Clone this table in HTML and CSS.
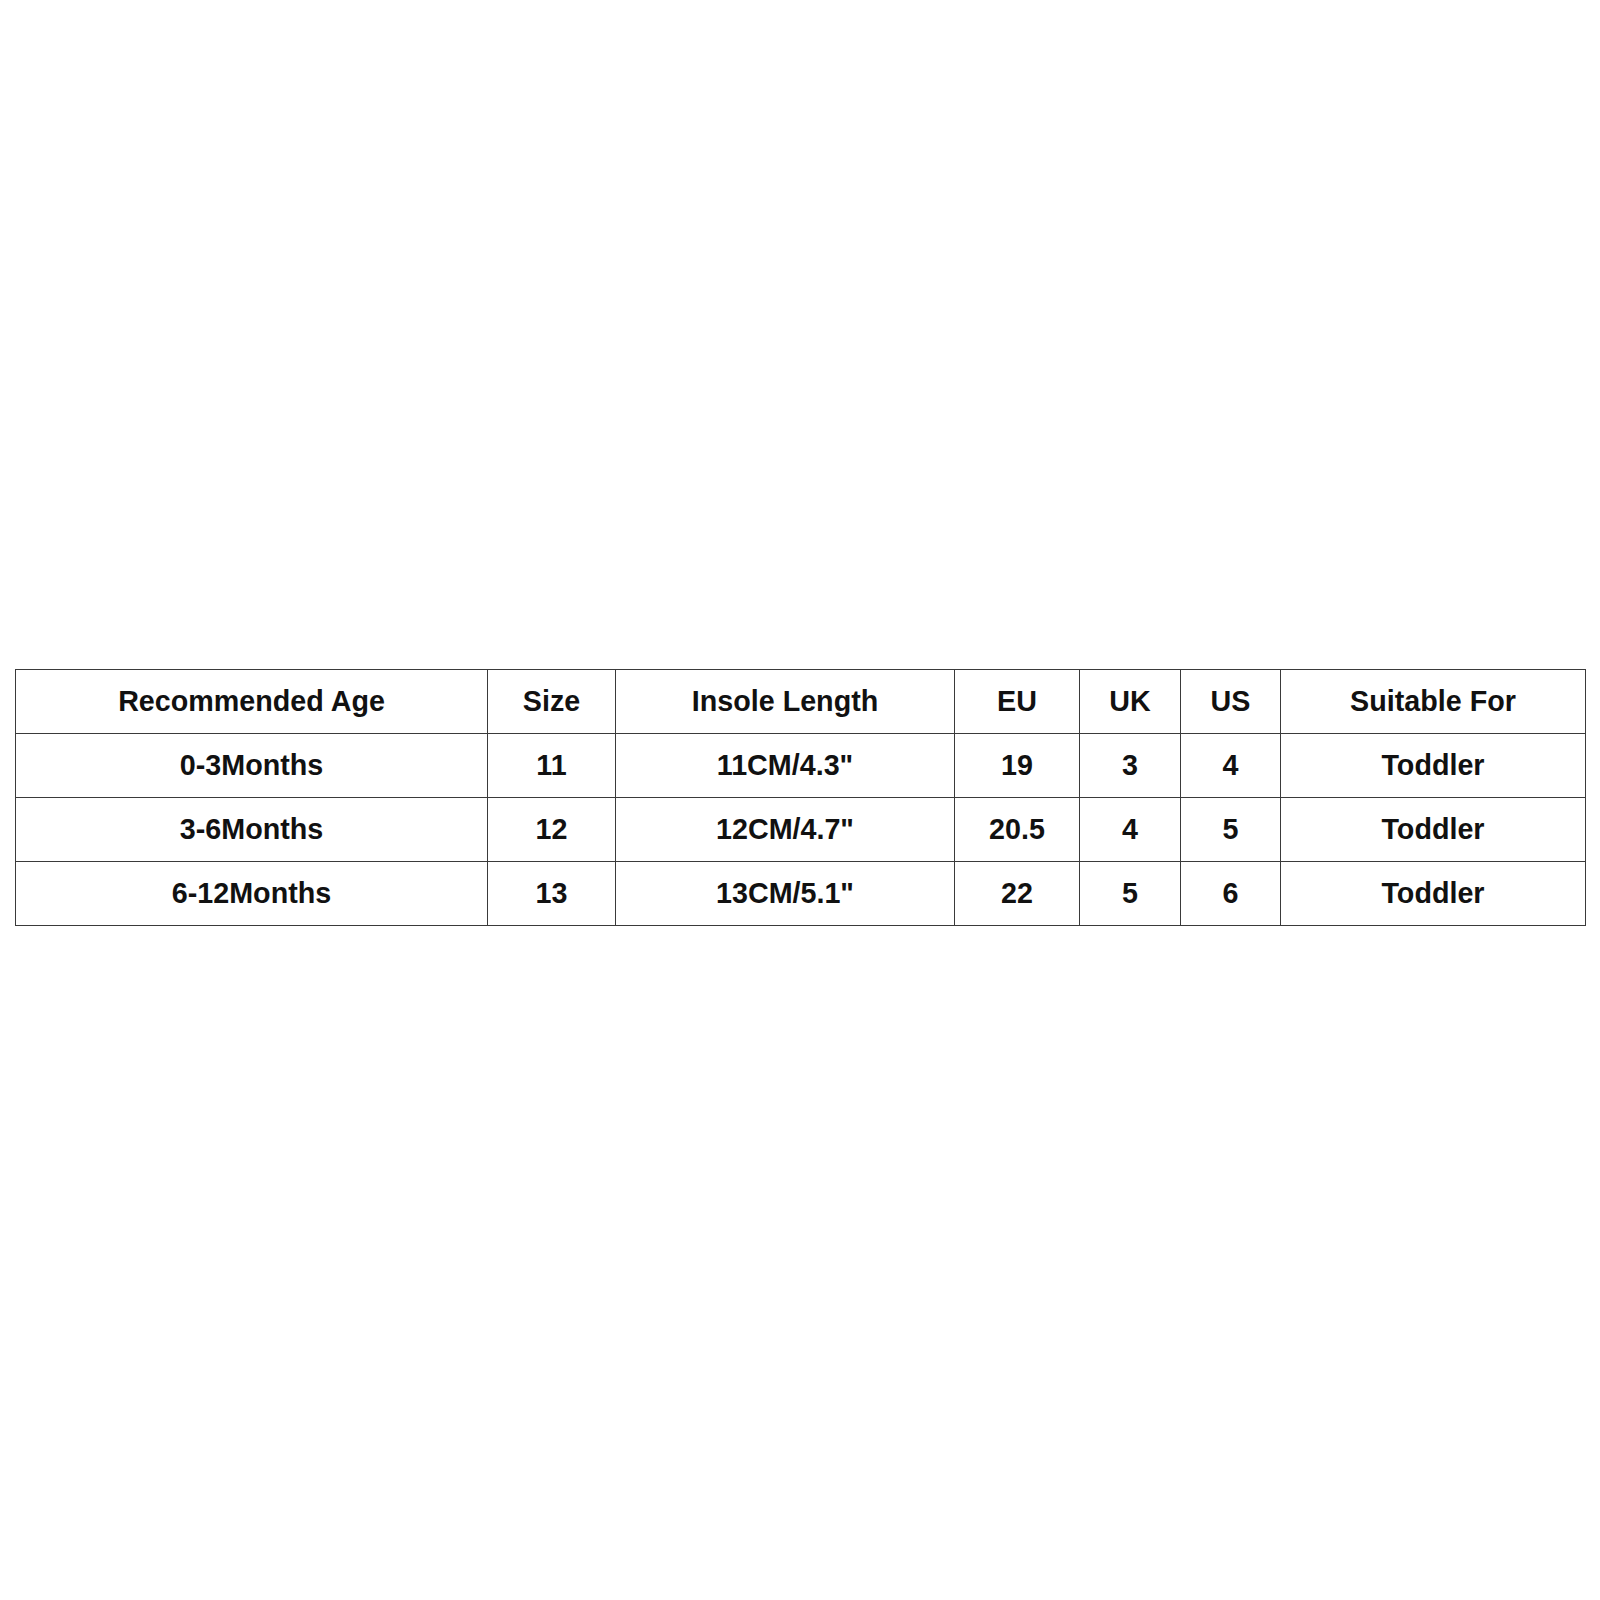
FILE: index.html
```html
<!DOCTYPE html>
<html>
<head>
<meta charset="utf-8">
<link rel="stylesheet" href="styles.css">
</head>
<body>
<div class="page">
  <table class="size-table">
    <colgroup>
      <col class="c-age">
      <col class="c-size">
      <col class="c-insole">
      <col class="c-eu">
      <col class="c-uk">
      <col class="c-us">
      <col class="c-for">
    </colgroup>
    <thead>
      <tr>
        <th>Recommended Age</th>
        <th>Size</th>
        <th>Insole Length</th>
        <th>EU</th>
        <th>UK</th>
        <th>US</th>
        <th>Suitable For</th>
      </tr>
    </thead>
    <tbody>
      <tr>
        <td>0-3Months</td>
        <td>11</td>
        <td>11CM/4.3"</td>
        <td>19</td>
        <td>3</td>
        <td>4</td>
        <td>Toddler</td>
      </tr>
      <tr>
        <td>3-6Months</td>
        <td>12</td>
        <td>12CM/4.7"</td>
        <td>20.5</td>
        <td>4</td>
        <td>5</td>
        <td>Toddler</td>
      </tr>
      <tr>
        <td>6-12Months</td>
        <td>13</td>
        <td>13CM/5.1"</td>
        <td>22</td>
        <td>5</td>
        <td>6</td>
        <td>Toddler</td>
      </tr>
    </tbody>
  </table>
</div>
</body>
</html>
```
FILE: styles.css
```css
html, body {
  margin: 0;
  padding: 0;
  background: #ffffff;
}

.page {
  width: 1600px;
  height: 1600px;
  padding: 669px 0 0 15px;
  box-sizing: border-box;
}

.size-table {
  border-collapse: collapse;
  table-layout: fixed;
  width: 1570px;
  font-family: "Liberation Sans", Arial, sans-serif;
  font-weight: bold;
  font-size: 28.7px;
  color: #111111;
}

.c-age { width: 472px; }
.c-size { width: 128px; }
.c-insole { width: 339px; }
.c-eu { width: 125px; }
.c-uk { width: 101px; }
.c-us { width: 100px; }
.c-for { width: 305px; }

.size-table tr {
  height: 64px;
}

.size-table th,
.size-table td {
  border: 1px solid #3a3a3a;
  padding: 0;
  text-align: center;
  vertical-align: middle;
  font-weight: bold;
  line-height: 33px;
}
```
